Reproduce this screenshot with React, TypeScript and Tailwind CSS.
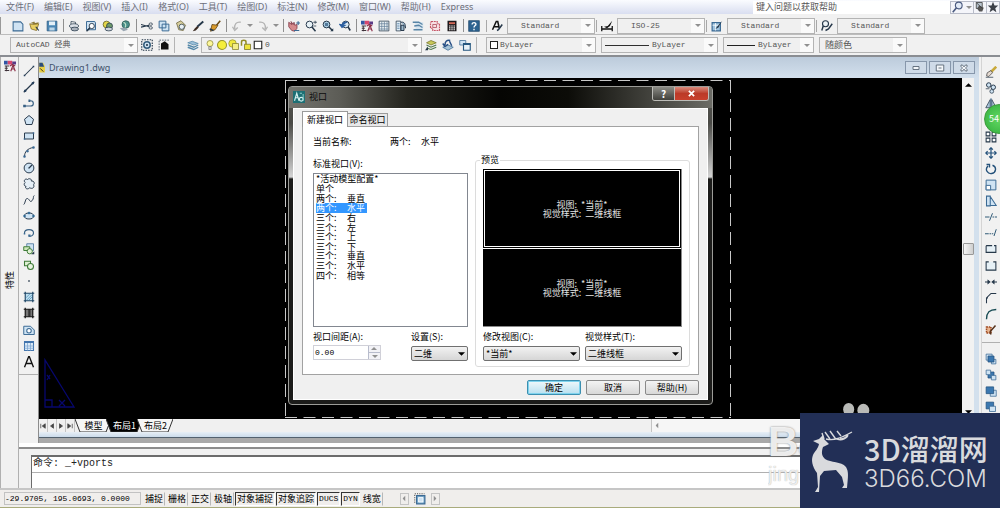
import type { ReactNode } from "react";

const K = "#26384a";
const N = "#3b6a94";
const L = "#cfe3f3";

const icons: Record<string, ReactNode> = {
  fresh: <path d="M1.5 2.5h10l3 3v9h-13z" fill={L} stroke={N} strokeWidth="1.4" />,
  open: <><path d="M2 4l5-2 1 2 5-1-2 4z" fill="#8c7a3a" /><path d="M1 5l4 1 8-1-3 9-7-2z" fill="#e9cf62" stroke="#7d6520" /><path d="M9 9l4 5" stroke={K} strokeWidth="1.6" /></>,
  save: <><path d="M1.5 1.5h13v13h-13z" fill="#4a86b4" stroke="#2d5b82" /><path d="M4 2h8v5H4z" fill="#e4f0f8" /><path d="M4.500 10h7v4h-7z" fill="#bcd6e8" /></>,
  print: <><path d="M4 6V2l6 1v4" fill="#fff" stroke={K} /><ellipse cx="8" cy="8" rx="6" ry="3" fill="#dde2e8" stroke={K} /><ellipse cx="9" cy="12" rx="5" ry="2.500" fill="#aab2bc" stroke={K} /></>,
  preview: <><path d="M2 2h11l1 2v9H2z" fill={L} stroke={N} strokeWidth="1.300" /><circle cx="9" cy="8" r="3.500" fill="#fff" stroke={K} strokeWidth="1.200" /><path d="M6.500 10.500L2 15" stroke={K} strokeWidth="2" /></>,
  publish: <><circle cx="6" cy="6" r="4.500" fill="#e3d64a" stroke="#5c5c20" /><circle cx="10" cy="8" r="4" fill="#6d9a6a" stroke={K} /><ellipse cx="9" cy="12" rx="5" ry="2.500" fill="#ccd3da" stroke={K} /></>,
  globe: <><circle cx="9" cy="6" r="5" fill="#4b8f8a" stroke="#27544f" /><path d="M6 3c3 1 4 4 2 7" stroke="#cbe8d0" strokeWidth="1.500" fill="none" /><path d="M1 11l6-1 5 3-6 2z" fill="#9aa6b2" /></>,
  cut: <><path d="M0 6l11 3M0 9.500L11 7" stroke={K} strokeWidth="1.500" /><ellipse cx="13" cy="5.500" rx="2.300" ry="1.600" fill="none" stroke={K} /><ellipse cx="13" cy="10.500" rx="2.300" ry="1.600" fill="none" stroke={K} /></>,
  copy: <path d="M1.500 1.500h9v9h-9zM5.500 5.500h9v9h-9z" fill={L} stroke={N} strokeWidth="1.300" />,
  paste: <><path d="M2 4l6-3 6 6-3 7-6-1z" fill="#d9cf9c" stroke="#686038" /><circle cx="9" cy="9" r="3.500" fill="#e8f0f4" stroke={K} /></>,
  match: <><path d="M15 2L7 9" stroke={K} strokeWidth="2.500" /><path d="M7 8l2 2-4 4-4 1 3-4z" fill="#3a2a20" /></>,
  brush: <><path d="M15 1l-5 6" stroke="#6a4a14" strokeWidth="2" /><path d="M4 6l8 1-4 6-6 2z" fill="#d99a2c" stroke="#5a3c0c" /><path d="M1 12l5 2" stroke={K} strokeWidth="2" /></>,
  undo: <path d="M13 3C7 2 4 6 5 12M2 9l3 5 4-4" fill="none" stroke="#b4b4b4" strokeWidth="1.800" />,
  redo: <path d="M3 3c6-1 9 3 8 9M14 9l-3 5-4-4" fill="none" stroke="#b4b4b4" strokeWidth="1.800" />,
  pan: <><path d="M1 3l4 3-1-4 3 4 1-3 1 4 3-1v5l-3 4-4-1-4-5z" fill="#d58a8c" stroke="#7a3040" /><path d="M11 4h5M13.500 1.500v5M8 14h7" stroke={N} strokeWidth="1.500" /></>,
  zoomrt: <><circle cx="6" cy="6" r="4.500" fill="#e7f1f6" stroke={K} strokeWidth="1.300" /><path d="M9 9l5 6" stroke={K} strokeWidth="2" /><path d="M11 3h5M13.500 1v4M11 8h4" stroke={K} /></>,
  zoomwin: <><circle cx="6" cy="6" r="4.500" fill="#a9cbe0" stroke={K} strokeWidth="1.300" /><path d="M4 4h4v4H4z" fill="#547a9a" /><path d="M9 9l5 5" stroke={K} strokeWidth="2" /><path d="M15 11v4h-4z" fill={K} /></>,
  zoomprev: <><circle cx="9" cy="6" r="4.500" fill="#d9e8f2" stroke={K} strokeWidth="1.300" /><path d="M12 9l3 5" stroke={K} strokeWidth="2" /><path d="M11 3C6 2 4 5 4 8M1 6l3 4 4-3z" fill="#2c5fa0" stroke="#2c5fa0" strokeWidth="1.500" /></>,
  props: <><path d="M0 1h5v5H0z" fill="#3156a4" /><path d="M5 1h6v5H5z" fill="#d64870" /><path d="M11 2h5v4h-5z" fill="#5a3a86" /><path d="M1 8h6M1 11h4M1 14h6M3 8v7" stroke="#3d3038" strokeWidth="1.300" fill="none" /><path d="M8 8l3-2 4 2M9 15l3-8 3 8M10 12h4" stroke="#8a2c46" strokeWidth="1.500" fill="none" /></>,
  center: <><path d="M1.500 1.500h13v13h-13z" fill="#eef3f6" stroke={K} /><path d="M5 2v12M8.500 2v12M12 2v12M2 5h12M2 8.500h12M2 12h12" stroke="#65809a" /></>,
  palettes: <><path d="M1.500 1.500h6v13h-6z" fill="#e1edf5" stroke={K} /><path d="M3 5h3M3 8h3M3 11h3" stroke={N} /><path d="M8 3c5-1 6 3 6 8M8 7h4v7H8z" stroke={K} strokeWidth="1.300" fill="#9fb9cc" /></>,
  sheet: <><path d="M4 2l11 1v9L5 14z" fill="#d7e5ef" /><path d="M1 3h8l5 3M3 8l6-1 5 3M2 13h12" stroke="#5985a6" strokeWidth="1.700" fill="none" /></>,
  markup: <><path d="M3 2h8v3h3v9H5v-3H2V4z" fill="#f7dfe3" stroke="#c65566" strokeWidth="1.500" strokeDasharray="2.500 1" /><path d="M5 6h5v4H5z" fill="none" stroke="#a94454" /></>,
  calc: <><path d="M2 1h12v14H2z" fill="#1e1a1c" /><path d="M4 3h8v2.500H4z" fill="#d46a58" /><path d="M4 8h8M4 10.500h8M4 13h8" stroke="#eee" strokeDasharray="2 1" strokeWidth="1.400" /></>,
  help: <><rect x="1" y="1" width="14" height="14" fill="#2e6390" stroke="#1b4467" /><path d="M5.500 6c0-3.500 5.500-3 5 0-.3 1.500-2.500 1.500-2.500 4M8 11.500v2" stroke="#fff" strokeWidth="1.800" fill="none" /></>,
  gear: <><rect x="1" y="1" width="14" height="14" fill="none" stroke={K} strokeWidth="1.500" strokeDasharray="2 1.500" /><circle cx="8" cy="8" r="4.300" fill={L} stroke="#345d7c" strokeWidth="2" /><circle cx="8" cy="8" r="1.400" fill={K} /></>,
  workspace: <><path d="M4 6l5-3 5 4v7H4z" fill="#111" /><path d="M1.500 15V1.500H15" stroke={K} strokeDasharray="2 1.500" fill="none" /></>,
  layers: <><path d="M1 5l6-2 8 3-6 2z" fill="#9cc0d8" stroke="#5487a8" /><path d="M1 8l8 3 6-3M1 11l8 3 6-3" fill="none" stroke="#5487a8" strokeWidth="1.800" /></>,
  bulb: <><circle cx="8" cy="6" r="4" fill="#fdf79a" stroke="#8b8735" /><path d="M6.500 10h3v4h-3z" fill="#ddd" stroke="#777" /></>,
  sun: <circle cx="8" cy="8" r="6" fill="#f5ee3c" stroke="#97942c" strokeWidth="1.400" />,
  sunvp: <><circle cx="6" cy="6" r="5" fill="#f1e93c" stroke="#97942c" /><path d="M6 6h8v8H6z" fill="#f3ed87" stroke="#817d2c" /></>,
  lock: <><path d="M2 9V4c0-3 6-3 6 0v5" fill="none" stroke="#938b25" strokeWidth="2" /><path d="M6 7h8v7H6z" fill="#eee33a" stroke="#767020" /></>,
  square: <path d="M3 3h10v10H3z" fill="#fff" stroke="#222" strokeWidth="1.500" />,
  layerA: <><path d="M2 5l6-3 7 3-7 3z" fill="#c9c95a" stroke="#72722a" /><path d="M2 8l6 3 7-3M2 12l6 2 7-3" fill="none" stroke="#50794c" strokeWidth="1.500" /><path d="M0 15l4-5v5z" fill={K} /></>,
  layerB: <><path d="M1 11l7-3 7 3-7 4z" fill="#a7c4d8" stroke={N} /><path d="M11 2C6 1 4 4 4 8M1 6l3 4 4-3M10 3l3 6" fill="none" stroke="#274f85" strokeWidth="2" /></>,
  layerC: <><path d="M1 2h8v6H1z" fill={L} stroke={N} /><path d="M6 6h9v9H6z" fill="#e6f1f8" stroke="#24567f" strokeWidth="1.500" /><path d="M6 7h9" stroke="#24567f" strokeWidth="2" /></>,
  textStyle: <><path d="M2 13L7 2h2l2 9M4 9h6" fill="none" stroke="#111" strokeWidth="2" /><path d="M15 6l-5 7-2 1" fill="none" stroke={K} strokeWidth="2" /></>,
  dimStyle: <><path d="M1 8v7M15 8v7M1 12h14" stroke="#111" strokeWidth="1.700" /><path d="M15 1l-6 7-5 1 4 2 4-3z" fill="#111" /></>,
  tableStyle: <><path d="M1.500 3.500h11v11h-11z" fill="#9fc3de" stroke={N} strokeWidth="1.600" /><path d="M2 7h10M6 4v10" stroke="#fff" /><path d="M15 1L8 9l-2 3 4-2z" fill={K} /></>,
  leader: <><circle cx="6" cy="5" r="4" fill="#eef3f6" stroke={K} strokeWidth="1.500" /><path d="M3 8l-2 6M15 5l-5 7-4 2" fill="none" stroke={K} strokeWidth="1.900" /></>,
  line: <><path d="M2 14L14 2" stroke={K} strokeWidth="1.400" /><path d="M1 13h2v2H1zM13 1h2v2h-2z" fill="#243f5c" /></>,
  xline: <><path d="M1 15L15 1" stroke={K} strokeWidth="1.600" /><path d="M2 12h2v2H2zM12 2h2v2h-2z" fill="#243f5c" stroke="#243f5c" /></>,
  pline: <path d="M1 12h9c5 0 5-7 0-7H8M1 11h2v2H1zM8 4h1v2H8z" fill="none" stroke="#365f83" strokeWidth="1.500" />,
  polygon: <path d="M8 2l6 5-2 7H4L2 7z" fill={L} stroke={K} strokeWidth="1.300" />,
  rect: <><path d="M2 4h12v8H2z" fill={L} stroke={K} strokeWidth="1.300" /><path d="M1 11h2v2H1zM13 3h2v2h-2z" fill={N} /></>,
  arc: <><path d="M2 14C2 8 6 3 14 2" fill="none" stroke={K} strokeWidth="1.300" /><path d="M1 13h2v2H1zM5 6h2v2H5zM13 1h2v2h-2z" fill={N} stroke={N} /></>,
  circle: <><circle cx="8" cy="8" r="6.500" fill={L} stroke={K} strokeWidth="1.300" /><path d="M8 8l4-4M7 8h2" stroke={K} strokeWidth="1.600" /></>,
  cloud: <path d="M3 6C0 4 3 0 6 2c2-2 6-1 5 2 4-1 5 4 3 5 2 4-2 6-5 4-3 3-7 1-5-2C1 11 1 7 3 6z" fill="#e6eff6" stroke={K} strokeWidth="1.300" />,
  spline: <path d="M1 14c2-1 2-9 5-8s3 6 6 3 1-6 3-7" fill="none" stroke={K} strokeWidth="1.300" />,
  ellipse: <><ellipse cx="8" cy="8" rx="6" ry="4" fill={L} stroke={K} strokeWidth="1.300" /><path d="M1 7h2v2H1zM13 7h2v2h-2zM7 3h2v2H7z" fill="#2e6a96" stroke="#2e6a96" /></>,
  earc: <><path d="M2 8c0-6 12-6 12 0 0 3-3 5-6 4" fill="none" stroke="#365f83" strokeWidth="1.500" /><path d="M1 8h2v2H1zM7 10h3v3H7z" fill={N} /></>,
  insert: <><path d="M5 1h9v9H5z" fill={L} stroke={N} /><path d="M1 5h8v5H1z" fill="#cfe8bd" stroke="#3e7a37" strokeWidth="1.300" /><circle cx="9" cy="11" r="3.500" fill="#e2f2d6" stroke="#3e7a37" strokeWidth="1.300" /><path d="M15 11v4h-4z" fill={K} /></>,
  block: <><path d="M2 3h8v6H2z" fill="#dff0d3" stroke="#3e7a37" strokeWidth="1.400" /><circle cx="10" cy="10" r="4" fill="#e9f5e1" stroke="#3e7a37" strokeWidth="1.400" /></>,
  point: <path d="M7 7h2v2H7z" fill={K} />,
  hatch: <><path d="M3 3h10v10H3z" fill="#bfe0f0" /><path d="M1 3h14M1 13h14M3 1v14M13 1v14" stroke="#1d4565" strokeWidth="1.500" /><path d="M4 9l5-5M5 12l7-7M8 12l4-4" stroke="#4d8fb8" /></>,
  gradient: <><path d="M3 3h10v10H3z" fill="#777" /><path d="M7 3h3v10H7z" fill="#333" /><path d="M1 3h14M1 13h14M3 1v14M13 1v14" stroke="#161616" strokeWidth="1.600" /></>,
  region: <><path d="M1 3h9l5 5v6H1z" fill={L} stroke={N} strokeWidth="1.300" /><circle cx="8" cy="9" r="3" fill="#fff" stroke={N} strokeWidth="1.400" /></>,
  table: <><path d="M2 2h12v12H2z" fill="#dcebf8" stroke="#4476ae" strokeWidth="1.400" /><path d="M2 3h12" stroke="#4476ae" strokeWidth="2" /><path d="M6 4v10M10 4v10M2 8h12M2 11h12" stroke="#7ea6d2" /></>,
  mtext: <path d="M2 15L7.500 1h1L14 15M4 10h8" fill="none" stroke="#111" strokeWidth="1.800" />,
  erase: <><path d="M15 1L7 9" stroke="#c9a93a" strokeWidth="3.500" /><path d="M3 9l5-3 2 3-5 5-3-1z" fill="#e4d9d0" stroke="#444" /><path d="M1 15h10" stroke={K} /></>,
  copyObj: <><circle cx="5" cy="4" r="3" fill={L} stroke={K} strokeWidth="1.300" /><circle cx="11" cy="7" r="3" fill={L} stroke={K} strokeWidth="1.300" /><circle cx="9" cy="12.500" r="2.500" fill={L} stroke={K} /><path d="M1 9h5" stroke={K} /></>,
  mirror: <><path d="M7 2v11H1zM9 2v11h6z" fill="#a9c4da" stroke={K} /><path d="M8 0v16" stroke={N} /></>,
  offset: <path d="M2 14C0 7 5 2 12 2M6 14c0-5 2-7 7-8" fill="none" stroke={K} strokeWidth="1.400" />,
  array: <path d="M1.500 1.500h5v5h-5zM9.500 1.500h5v5h-5zM1.500 9.500h5v5h-5zM9.500 9.500h5v5h-5z" fill="#fff" stroke={K} strokeWidth="1.400" />,
  move: <path d="M8 1v14M1 8h14M5.500 3.500L8 1l2.500 2.500M5.500 12.500L8 15l2.500-2.500M3.500 5.500L1 8l2.500 2.500M12.500 5.500L15 8l-2.500 2.500" fill="none" stroke="#24517a" strokeWidth="1.600" />,
  rotate: <path d="M4 4c-5 5 0 11 5 10 6-1 7-9 1-11M2 2h4v4" fill="none" stroke="#24517a" strokeWidth="1.800" />,
  scale: <><path d="M1.500 1.500h13v13h-13z" fill={L} stroke={N} strokeWidth="1.300" /><path d="M1.500 8.500h6v6h-6z" fill="#fff" stroke={N} strokeWidth="1.300" /></>,
  stretch: <path d="M2 1.500h5v13H2zM7 2l8 12H7" fill={L} stroke={N} strokeWidth="1.400" />,
  trim: <path d="M0 8h6M10 8h2M13 8h3M10 3L6 13" stroke="#2b5674" strokeWidth="1.300" />,
  extend: <path d="M0 9h5M6 9h2M9 9h2M15 3l-3 9" stroke="#2b5674" strokeWidth="1.300" />,
  breakPt: <path d="M1.500 3.500h8M12 3.500h2.500v9h-13v-9" fill="#e6f0f6" stroke={K} strokeWidth="1.400" />,
  breakObj: <path d="M5 2.500H1.500v11h13v-11H11" fill="#e6f0f6" stroke={K} strokeWidth="1.400" />,
  join: <path d="M0 8h5M16 8h-5M4 6l2.500 2L4 10zM12 6L9.500 8l2.500 2z" fill={K} stroke={K} strokeWidth="1.400" />,
  chamfer: <path d="M2 15V8l6-6h7M2 8h2" fill="none" stroke={K} strokeWidth="1.400" />,
  fillet: <path d="M2 15C2 6 6 2 15 2" fill="none" stroke="#174b53" strokeWidth="1.800" />,
  explode: <><path d="M2 4h6v8H2z" fill="#e9b48e" stroke="#a04a20" strokeDasharray="2 1" strokeWidth="2" /><path d="M14 2L7 10l1 4" stroke="#57331c" strokeWidth="2" fill="none" /></>,
  front: <><path d="M1.500 1.500h8v8h-8zM8.500 8.500h6v6h-6z" fill={L} stroke={N} /><path d="M4 4h8v8H4z" fill="#3c78b0" stroke="#23517e" /></>,
  back: <><path d="M4 4h8v8H4z" fill="#3c78b0" stroke="#23517e" /><path d="M1.500 1.500h6v6h-6zM8.500 8.500h6v6h-6z" fill={L} stroke={N} /></>,
  above: <><path d="M7 7h8v8H7z" fill={L} stroke={N} /><path d="M1.500 2.500h10v9h-10z" fill="#3c78b0" stroke="#23517e" /></>,
  under: <><path d="M1.500 1.500h10v9h-10z" fill="#3c78b0" stroke="#23517e" /><path d="M6 7h8v7H6z" fill={L} stroke={N} /></>,
  search: <><circle cx="9" cy="6" r="4.500" fill="#e2eaf6" stroke="#4b5b80" strokeWidth="1.500" /><path d="M6 9l-5 6" stroke="#4b5b80" strokeWidth="2.200" /></>,
  comm: <><path d="M3 2h8v8H3z" fill="#b8c4cf" stroke="#333" /><path d="M7 6l6 3-2 5H7l-3-4z" fill="#555" /><path d="M3 2l8 8" stroke="#333" /></>,
  star: <path d="M8 1l2 5h5l-4 3.500 1.500 5.500L8 12l-4.500 3L5 9.500 1 6h5z" fill="#3c4048" />,
  vp: <><path d="M3.500 3.500h11v11h-11z" fill="#85b2d3" stroke={N} strokeWidth="1.600" /><path d="M6 6h6v6H6z" fill={L} stroke="#fff" /><path d="M1 13V1h13" stroke="#222" strokeDasharray="1.500 1.500" fill="none" /></>,
};

function Ic({ n }: { n: string }) {
  return <svg viewBox="0 0 16 16" className="size-[12px] shrink-0" aria-hidden="true">{icons[n]}</svg>;
}

function Tool({ n }: { n: string }) {
  return <button type="button" aria-label={n} className="flex w-[17px] shrink-0 items-center justify-center"><Ic n={n} /></button>;
}

function Sep() {
  return <span className="mr-px ml-[3px] h-[13px] w-px shrink-0 bg-[#8f8f8f]" />;
}

function Down({ dark }: { dark?: boolean }) {
  return (
    <svg viewBox="0 0 8 4" className={dark ? "h-[4px] w-[7px] text-black" : "h-[3px] w-[6px] text-[#909090]"} aria-hidden="true">
      <path d="M0 0h8L4 4z" fill="currentColor" />
    </svg>
  );
}

const mono = "font-['Liberation_Mono','Noto_Sans_CJK_SC',monospace]";

function Combo({ label, value, className, before, pad = "pl-[13px]", cjk }: { label: string; value: string; className: string; before?: ReactNode; pad?: string; cjk?: boolean }) {
  return (
    <span className={`relative flex h-[16px] shrink-0 items-center border border-[#b4b4b4] bg-[#f0f0f0] ${className}`}>
      {before}
      <select aria-label={label} className={`h-full min-w-0 flex-1 appearance-none bg-transparent text-[#555] outline-none ${pad} ${cjk ? "text-[9px]" : `text-[8px] ${mono}`}`}>
        <option>{value}</option>
      </select>
      <span className="pointer-events-none absolute inset-y-0 right-0 flex w-[13px] items-center justify-center bg-[#fafafa]"><Down /></span>
    </span>
  );
}

function StyleGroup({ icon, label, value }: { icon: string; label: string; value: string }) {
  return (
    <span className="flex w-[110px] shrink-0 items-center">
      <span className="flex w-[21px] justify-center border-l border-[#a8a8a8]"><Ic n={icon} /></span>
      <Combo label={label} value={value} className="w-[88px]" />
    </span>
  );
}

const menus = ["文件(F)", "编辑(E)", "视图(V)", "插入(I)", "格式(O)", "工具(T)", "绘图(D)", "标注(N)", "修改(M)", "窗口(W)", "帮助(H)", "Express"];
const bar1 = ["fresh", "open", "save", "|", "print", "preview", "publish", "globe", "|", "cut", "copy", "paste", "match", "brush", "|", "undo", "v", "redo", "v", "|", "pan", "zoomrt", "zoomwin", "zoomprev", "|", "props", "center", "palettes", "sheet", "markup", "calc", "|", "help"];
const drawTools = ["line", "xline", "pline", "polygon", "rect", "arc", "circle", "cloud", "spline", "ellipse", "earc", "insert", "block", "point", "hatch", "gradient", "region", "table", "mtext"];
const modifyTools = ["erase", "copyObj", "mirror", "offset", "array", "move", "rotate", "scale", "stretch", "trim", "extend", "breakPt", "breakObj", "join", "chamfer", "fillet", "explode"];
const orderTools = ["front", "back", "above", "under"];
const layouts: [string, string][] = [["单个", ""], ["两个:", "垂直"], ["两个:", "水平"], ["三个:", "右"], ["三个:", "左"], ["三个:", "上"], ["三个:", "下"], ["三个:", "垂直"], ["三个:", "水平"], ["四个:", "相等"]];
const modes: [string, boolean][] = [["捕捉", false], ["栅格", false], ["正交", false], ["极轴", false], ["对象捕捉", true], ["对象追踪", true], ["DUCS", true], ["DYN", true], ["线宽", false]];

function MenuBar() {
  return (
    <header className="flex h-[14px] shrink-0 items-center bg-linear-to-b from-[#fbfcff] to-[#d9def0] text-[9px] leading-[14px] text-[#6c6f7a]">
      <nav className="flex flex-1 gap-[10px] pl-[6px]">
        {menus.map((m) => <button type="button" key={m} className="min-w-[27px] text-left whitespace-nowrap font-['Noto_Sans','Noto_Sans_CJK_SC',sans-serif]">{m}</button>)}
      </nav>
      <input aria-label="搜索" defaultValue="键入问题以获取帮助" className="h-[13px] w-[197px] bg-white pl-[3px] text-[9px] text-[#555] outline-none" />
      <div className="flex h-[13px] w-[50px] items-center border border-[#b8bcc8] bg-[#f4f5fa]">
        <button type="button" aria-label="查找" className="pl-px"><Ic n="search" /></button>
        <span className="flex w-[9px] justify-center text-[#444]"><Down /></span>
        <button type="button" aria-label="通讯中心" className="border-l border-[#b8bcc8]"><Ic n="comm" /></button>
        <button type="button" aria-label="收藏夹" className="border-l border-[#b8bcc8]"><Ic n="star" /></button>
      </div>
    </header>
  );
}

function Rule() {
  return <svg viewBox="0 0 100 2" preserveAspectRatio="none" className="ml-[3px] h-px w-[44px] shrink-0" aria-hidden="true"><path d="M0 1h100" stroke="#222" strokeWidth="2" /></svg>;
}

function Toolbars() {
  return (
    <>
      <div className="flex h-[21px] shrink-0 border-b border-[#bcbcbc] bg-[#f1f1f1] pt-[3px]">
        <div className="flex w-[481px] shrink-0 items-center border-l border-[#999] pl-[8px]">
          {bar1.map((n, i) => n === "|" ? <Sep key={i} /> : n === "v" ? <span key={i} className="flex w-[9px] shrink-0 justify-center"><Down /></span> : <Tool key={i} n={n} />)}
        </div>
        <div className="flex items-center pl-[5px]">
          <StyleGroup icon="textStyle" label="文字样式" value="Standard" />
          <StyleGroup icon="dimStyle" label="标注样式" value="ISO-25" />
          <StyleGroup icon="tableStyle" label="表格样式" value="Standard" />
          <StyleGroup icon="leader" label="多重引线样式" value="Standard" />
        </div>
      </div>
      <div className="flex h-[22px] shrink-0 items-center border-b-2 border-[#8a8d92] bg-[#f1f1f1]">
        <div className="flex w-[175px] shrink-0 items-center border-r border-[#b4b4b4] pl-[10px]">
          <Combo label="工作空间" value="AutoCAD 经典" className="w-[128px]" pad="pl-[5px]" />
          <Tool n="gear" /><Tool n="workspace" />
        </div>
        <div className="flex w-[302px] shrink-0 items-center border-r border-[#b4b4b4] pl-[9px]">
          <Tool n="layers" />
          <Combo label="图层" value="0" className="w-[221px]" pad="pl-px" before={<span className="flex pl-[2px]"><Ic n="bulb" /><Ic n="sun" /><Ic n="sunvp" /><Ic n="lock" /><Ic n="square" /></span>} />
          <Tool n="layerA" /><Tool n="layerB" /><Tool n="layerC" />
        </div>
        <div className="flex gap-[5px] pl-[9px]">
          <Combo label="颜色" value="ByLayer" className="w-[110px]" pad="pl-[2px]" before={<span className="ml-[3px] size-[8px] border border-[#222] bg-white" />} />
          <Combo label="线型" value="ByLayer" className="w-[117px]" pad="pl-[3px]" before={<Rule />} />
          <Combo label="线宽" value="ByLayer" className="w-[91px]" pad="pl-[3px]" before={<svg viewBox="0 0 30 2" preserveAspectRatio="none" className="ml-[3px] h-px w-[28px] shrink-0" aria-hidden="true"><path d="M0 1h30" stroke="#222" strokeWidth="2" /></svg>} />
          <Combo label="打印样式" value="随颜色" className="w-[88px]" pad="pl-[5px]" cjk />
        </div>
      </div>
    </>
  );
}

function DialogSelect({ id, value }: { id: string; value: string }) {
  return (
    <span className="relative mt-[3px] flex h-[15px]">
      <select id={id} className="h-full w-full appearance-none rounded-[2px] border border-[#707070] bg-linear-to-b from-[#f2f2f2] to-[#d6d6d6] pl-[2px] text-[9px] text-black outline-none">
        <option>{value}</option>
      </select>
      <span className="pointer-events-none absolute inset-y-0 right-[3px] flex items-center"><Down dark /></span>
    </span>
  );
}

function Pane({ active }: { active?: boolean }) {
  return (
    <div className={active ? "flex flex-1 flex-col p-px" : "flex flex-1 flex-col border-t border-white"}>
      <div className={`flex flex-1 flex-col items-center justify-center text-[9px] leading-[9px] text-[#e4e4e4] ${active ? "border border-white" : ""}`}>
        <span>视图: &nbsp;*当前*</span>
        <span>视觉样式: &nbsp;二维线框</span>
      </div>
    </div>
  );
}

function ViewportDialog() {
  return (
    <section role="dialog" aria-label="视口" className="absolute top-[8px] left-[249px] w-[425px] overflow-hidden rounded-[4px] border border-[#9c9c98] bg-[linear-gradient(to_bottom,#55554f_0px,#4a4a46_36px,#d4d4d4_90px,#1c1c1a_92px)] px-[4px] pb-[4px] text-[9px] leading-[12px] text-black">
      <div className="-mx-[4px] flex h-[21px] bg-[linear-gradient(to_right,#74746e,#5c5c56_12%,#24241e_28%,#050503_50%,#0c0c08_66%,#55554f_92%,#6c6c66)] pl-[4px]">
        <svg viewBox="0 0 16 16" className="mt-[4px] size-[12px]" aria-hidden="true">
          <path d="M0 0h16v16H0z" fill="#1d6f74" />
          <path d="M2 13L5 3l3 10M3 9h4" stroke="#d8f2f0" strokeWidth="1.500" fill="none" />
          <circle cx="11" cy="11" r="2.500" fill="none" stroke="#d8f2f0" strokeWidth="1.500" />
          <path d="M13.500 4v9M9 3h3" stroke="#8fd0cc" strokeWidth="1.300" />
        </svg>
        <h2 className="flex-1 pt-[4px] pl-[4px] text-[#0c0c0c]">视口</h2>
        <div className="mr-[3px] flex h-[14px] overflow-hidden rounded-b-[3px] border border-t-0 border-[#bdbdb8] text-white">
          <button type="button" aria-label="帮助" className="w-[21px] bg-linear-to-b from-[#8c8c86] to-[#41413c] text-[10px] leading-[12px] font-bold">?</button>
          <button type="button" aria-label="关闭" className="flex w-[34px] items-center justify-center border-l border-[#bdbdb8] bg-linear-to-b from-[#d98a7c] via-[#bb3a28] to-[#c8402c]">
            <svg viewBox="0 0 8 8" className="size-[7px]" aria-hidden="true"><path d="M1 1l6 6M7 1L1 7" stroke="#fff" strokeWidth="2" /></svg>
          </button>
        </div>
      </div>
      <form onSubmit={(e) => e.preventDefault()} className="border border-white bg-[#f0f0f0] px-[8px] pt-[2px] pb-[4px]">
        <div role="tablist" className="flex items-end">
          <button type="button" role="tab" aria-selected="true" className="relative -mb-px h-[16px] w-[46px] border border-b-0 border-[#9a9a9a] bg-white">新建视口</button>
          <button type="button" role="tab" aria-selected="false" className="h-[13px] w-[40px] border border-b-0 border-l-0 border-[#9a9a9a] bg-[#e8e8e8]">命名视口</button>
        </div>
        <div className="border border-[#a2a2a2] bg-white pt-[9px] pr-[8px] pb-[7px] pl-[10px]">
          <p className="flex"><span className="w-[77px]">当前名称:</span><span className="w-[31px]">两个:</span><span>水平</span></p>
          <div className="mt-[6px] flex justify-between">
            <div className="w-[155px] pt-[4px]">
              <span id="std">标准视口(V):</span>
              <div className="mt-[3px] h-[154px] border border-[#828790] px-[2px]">
                <ul role="listbox" aria-labelledby="std" className="flex h-[106px] flex-col">
                  <li role="option" aria-selected="false" className="flex flex-1 items-center leading-[9px]">*活动模型配置*</li>
                  {layouts.map(([a, b], i) => (
                    <li key={i} role="option" aria-selected={i === 2} className={`flex w-[51px] flex-1 items-center leading-[9px] ${i === 2 ? "bg-[#3397ff] text-white" : ""}`}>
                      <span className="w-[31px]">{a}</span><span>{b}</span>
                    </li>
                  ))}
                </ul>
              </div>
              <div className="mt-[4px] flex justify-between">
                <div className="w-[68px]">
                  <label htmlFor="gap">视口间距(A):</label>
                  <span className="mt-[2px] flex h-[15px] border border-[#d0d0d8]">
                    <input id="gap" defaultValue="0.00" className={`w-0 flex-1 bg-white pl-px text-[8px] outline-none ${mono}`} />
                    <span className="flex w-[12px] flex-col border-l border-[#b8bccc] bg-[#f2f2f6]">
                      <button type="button" aria-label="增加" className="flex flex-1 rotate-180 items-center justify-center"><Down /></button>
                      <button type="button" aria-label="减少" className="flex flex-1 items-center justify-center border-t border-[#b8bccc]"><Down /></button>
                    </span>
                  </span>
                </div>
                <div className="w-[57px]"><label htmlFor="setup">设置(S):</label><DialogSelect id="setup" value="二维" /></div>
              </div>
            </div>
            <fieldset className="w-[215px] rounded-[3px] border border-[#dcdcdc] px-[7px] pb-[5px]">
              <legend className="-ml-[3px] px-px">预览</legend>
              <div className="mt-[3px] flex h-[158px] flex-col border-r border-b border-[#8a8a8a] bg-black"><Pane active /><Pane /></div>
              <div className="mt-[4px] grid grid-cols-2 gap-[5px]">
                <div><label htmlFor="view">修改视图(C):</label><DialogSelect id="view" value="*当前*" /></div>
                <div><label htmlFor="style">视觉样式(T):</label><DialogSelect id="style" value="二维线框" /></div>
              </div>
            </fieldset>
          </div>
        </div>
        <div className="mt-[5px] flex justify-end gap-[5px]">
          <button type="submit" className="h-[15px] w-[54px] rounded-[2px] border border-[#3c8fb0] bg-linear-to-b from-[#f0f8fb] to-[#b8e0f0] leading-[12px] ring-1 ring-[#7fd3ee] ring-inset">确定</button>
          <button type="button" className="h-[15px] w-[54px] rounded-[2px] border border-[#8a8a8a] bg-linear-to-b from-[#f4f4f4] to-[#d8d8d8] leading-[12px]">取消</button>
          <button type="button" className="h-[15px] w-[54px] rounded-[2px] border border-[#8a8a8a] bg-linear-to-b from-[#f4f4f4] to-[#d8d8d8] leading-[12px]">帮助(H)</button>
        </div>
      </form>
    </section>
  );
}

function Drawing() {
  return (
    <div className="relative min-w-0 flex-1 overflow-hidden bg-black">
      <svg className="absolute top-[2px] left-[246px] h-[338px] w-[446px]" viewBox="0 0 446 338" aria-hidden="true">
        <path d="M0 .5h446M0 337.500h446" stroke="#c8c8c8" strokeDasharray="12 6.500" />
        <path d="M.5 0v338M445.500 0v338" stroke="#c8c8c8" strokeDasharray="13 6" />
      </svg>
      <svg className="absolute bottom-[9px] left-[4px] h-[52px] w-[34px]" viewBox="0 0 34 52" aria-hidden="true">
        <path d="M2 2v47h29zM2 42h7v7M4 17l3 4M7 17l-3 5M16 42l6 6M22 42l-6 6" fill="none" stroke="#07076e" strokeWidth="1.300" />
      </svg>
      <ViewportDialog />
    </div>
  );
}

function MdiWindow() {
  return (
    <main className="flex min-w-0 flex-1 flex-col border-b-[5px] border-[#a9a9a9]">
      <div className="flex h-[21px] shrink-0 items-center bg-linear-to-b from-[#bccbdb] to-[#d3e0ed] text-[#3c5068]">
        <svg viewBox="0 0 8 16" className="h-[13px] w-[7px]" aria-hidden="true"><path d="M0 2h5l2 5v7H0z" fill="#e8cf47" /><path d="M0 2h4l2 5H0z" fill="#2b4d7e" /><path d="M1 9l4 4" stroke="#111" /></svg>
        <h1 className="flex-1 pl-[3px] font-['Noto_Sans',sans-serif] text-[9px]">Drawing1.dwg</h1>
        <div className="flex gap-[2px] pr-[4px]">
          {["M4 6h8v4H4z", "M3 4h10v8H3zM6 8h4", "M4 4h2l2 2.500L10 4h2v2l-2 2 2 2v2h-2L8 9.500 6 12H4v-2l2-2-2-2z"].map((d, i) => (
            <button type="button" key={i} aria-label={["最小化", "还原", "关闭窗口"][i]} className="flex h-[13px] w-[22px] items-center justify-center border border-[#8797ab] bg-[#cfdbe8]">
              <svg viewBox="0 0 16 16" className="size-[12px]" aria-hidden="true"><path d={d} fill="#f4f7fa" stroke="#5a6675" strokeWidth="1.200" /></svg>
            </button>
          ))}
        </div>
      </div>
      <div className="flex min-h-0 flex-1 border-r-[5px] border-[#d3e0ed]">
        <Drawing />
        <div className="flex w-[12px] shrink-0 flex-col items-center justify-between bg-[#f2f2f2] py-[5px]">
          <span className="rotate-180 text-black"><Down dark /></span>
          <span className="h-[12px] w-[11px] rounded-[1px] border border-[#989898] bg-linear-to-r from-[#f6f6f6] to-[#cfcfcf]" />
          <Down dark />
        </div>
      </div>
      <div className="flex h-[13px] shrink-0 border-r-[5px] border-[#d3e0ed] bg-[#f0f0f0] text-[9px] leading-[13px] text-black">
        <div className="flex w-[39px]">
          {["M1 1v6M7 1L3 4l4 3z", "M6 1L2 4l4 3z", "M2 1l4 3-4 3z", "M7 1v6M1 1l4 3-4 3z"].map((d, i) => (
            <button type="button" key={i} aria-label={["首页", "上一页", "下一页", "末页"][i]} className="flex w-[9px] items-center justify-center border-r border-[#c4c4c4]"><svg viewBox="0 0 8 8" className="size-[6px]" aria-hidden="true"><path d={d} fill="#444" stroke="#444" /></svg></button>
          ))}
        </div>
        {["模型", "布局1", "布局2"].map((t, i) => (
          <button type="button" key={t} className="relative w-[31px]">
            <svg viewBox="0 0 36 13" preserveAspectRatio="none" className="absolute inset-y-0 -left-[3px] h-full w-[36px]" aria-hidden="true"><path d="M0 0l5 13h26l5-13" fill={i === 1 ? "#000" : "#f6f6f6"} stroke="#333" /></svg>
            <span className={`relative ${i === 1 ? "text-white" : ""}`}>{t}</span>
          </button>
        ))}
        <span className="flex-1" />
        <div className="flex w-[323px] items-center border-l border-[#c4c4c4] bg-[#f6f6f6] pl-[2px] text-[#444]"><span className="rotate-90"><Down /></span></div>
      </div>
      <div className="h-[6px] shrink-0 border-b border-[#53616e] bg-linear-to-b from-[#e8eff6] to-[#cbdbea]" />
    </main>
  );
}

function Watermark() {
  return (
    <aside className="absolute right-0 bottom-0 w-[232px]">
      <svg viewBox="0 0 32 12" className="ml-[72px] h-[11px] w-[32px]" aria-hidden="true"><ellipse cx="8" cy="8" rx="6" ry="7" fill="#b9bab7" /><ellipse cx="24" cy="9" rx="6.500" ry="7" fill="#b9bab7" /></svg>
      <div className="flex">
        <div className="w-[32px] overflow-hidden font-['Liberation_Sans',sans-serif]">
          <p className="pt-[8px] text-[42px] leading-[42px] font-bold text-white/85 [text-shadow:0_0_2px_#777]">Bai</p>
          <p className="text-[20px] leading-[22px] text-white/80 [text-shadow:0_0_1px_#999]">jing</p>
        </div>
        <div className="flex h-[95px] w-[200px] bg-[#222f56] pl-[10px] text-[#d9dadd]">
          <svg viewBox="0 0 48 62" className="mt-[17px] h-[62px] w-[48px]" aria-hidden="true">
            <path d="M3 11l6-2 4-4 1 4 5 5-6 3c-2 6-1 9 2 12 6 4 16 2 21 8 3 5 2 10 1 21h-5l2-3-2-8-6-7-12 1-4 5-1 16H5l3-5-1-14C2 36 1 30 3 25c2-4 5-6 6-11z" fill="currentColor" />
            <path d="M14 9l-2-6M16 9c8 2 15-1 26-7M20 9l-5-7M25 8l-5-7M31 6l-4-5M25 8c6 4 10 1 13-2M30 9c4 0 6-1 8-4" fill="none" stroke="currentColor" strokeWidth="1.400" />
          </svg>
          <div className="pt-[18px] pl-[6px]">
            <p className="font-['Noto_Sans_CJK_SC',sans-serif] text-[29px] leading-[34px] font-medium whitespace-nowrap">3D溜溜网</p>
            <p className="font-['Inter',sans-serif] text-[24px] leading-[28px] font-light whitespace-nowrap">3D66.COM</p>
          </div>
        </div>
      </div>
    </aside>
  );
}

export default function App() {
  return (
    <div className="relative flex h-screen min-h-[508px] flex-col overflow-hidden bg-[#f1f1f1] font-['Noto_Sans_CJK_SC',sans-serif]">
      <MenuBar />
      <Toolbars />
      <div className="flex min-h-0 flex-1">
        <aside className="flex w-[19px] shrink-0 flex-col items-center border-r border-l border-[#b0b0b0] pt-[3px]">
          <Ic n="props" />
          <span className="mt-[202px] -rotate-90 text-[9px] leading-[12px] whitespace-nowrap text-black">特性</span>
        </aside>
        <div className="flex min-w-0 flex-1 flex-col">
          <div className="flex min-h-0 flex-1">
            <div className="w-[20px] shrink-0 border-r border-[#8c8c8c]">
              <div className="flex flex-col border-b border-[#b0b0b0] pt-[6px] pb-[4px]">
                <div className="flex h-[307px] flex-col">
                  {drawTools.map((n) => <button type="button" key={n} aria-label={n} className="flex flex-1 items-center justify-center"><Ic n={n} /></button>)}
                </div>
              </div>
            </div>
            <MdiWindow />
            <div className="relative ml-[2px] w-[19px] shrink-0 border-l border-[#d4d4d4]">
              <div className="flex h-[286px] flex-col border-b border-[#b0b0b0] pt-[7px] pb-[4px]">
                {modifyTools.map((n) => <button type="button" key={n} aria-label={n} className="flex flex-1 items-center justify-center"><Ic n={n} /></button>)}
              </div>
              <div className="mt-[8px] flex h-[64px] flex-col">
                {orderTools.map((n) => <button type="button" key={n} aria-label={n} className="flex flex-1 items-center justify-center"><Ic n={n} /></button>)}
              </div>
              <span className="absolute top-[47px] -right-[14px] flex size-[30px] items-center rounded-full border border-[#3d9a3d] bg-radial from-[#62d862] to-[#2fae3c] pl-[4px] text-[9px] text-white">54</span>
            </div>
          </div>
          <div className="flex h-[45px] shrink-0 flex-col">
            <div className="h-[7px] border-b-2 border-[#8c8c8c] bg-white" />
            <div className={`mt-[6px] ml-[12px] flex flex-1 flex-col border-t-2 border-l border-[#6c6c6c] bg-white text-[10px] ${mono}`}>
              <p className="h-[16px] border-b border-[#b0b0b0] pl-px leading-[13px] text-[#222]">命令: _+vports</p>
              <input aria-label="命令行" className="min-h-0 flex-1 bg-white outline-none" />
            </div>
          </div>
        </div>
      </div>
      <footer className="flex h-[20px] shrink-0 items-center border-t-2 border-b border-t-[#c6c6c6] border-b-[#a9ab7c] bg-[#f0eeec] pl-[4px] text-[9px] text-black">
        <output className={`h-[13px] w-[137px] border border-[#c2c2c2] text-[8px] leading-[11px] ${mono}`}>-29.9705, 195.0693, 0.0000</output>
        <div className="flex gap-px pl-[2px]">
          {modes.map(([m, on]) => (
            <button type="button" key={m} aria-pressed={on} className={`h-[14px] border px-px leading-[12px] whitespace-nowrap ${on ? "border-t-[#333] border-r-white border-b-white border-l-[#333]" : "border-transparent border-r-[#b8b8b8]"} ${m[0] === "D" ? `text-[8px] ${mono}` : ""}`}>{m}</button>
          ))}
        </div>
        <button type="button" aria-label="向左" className="ml-[17px] flex h-[12px] w-[9px] items-center justify-center border border-[#c4c4c4]"><span className="rotate-90"><Down /></span></button>
        <span className="px-[5px]"><Ic n="vp" /></span>
        <button type="button" aria-label="向右" className="flex h-[12px] w-[9px] items-center justify-center border border-[#c4c4c4]"><span className="-rotate-90"><Down /></span></button>
      </footer>
      <Watermark />
    </div>
  );
}
